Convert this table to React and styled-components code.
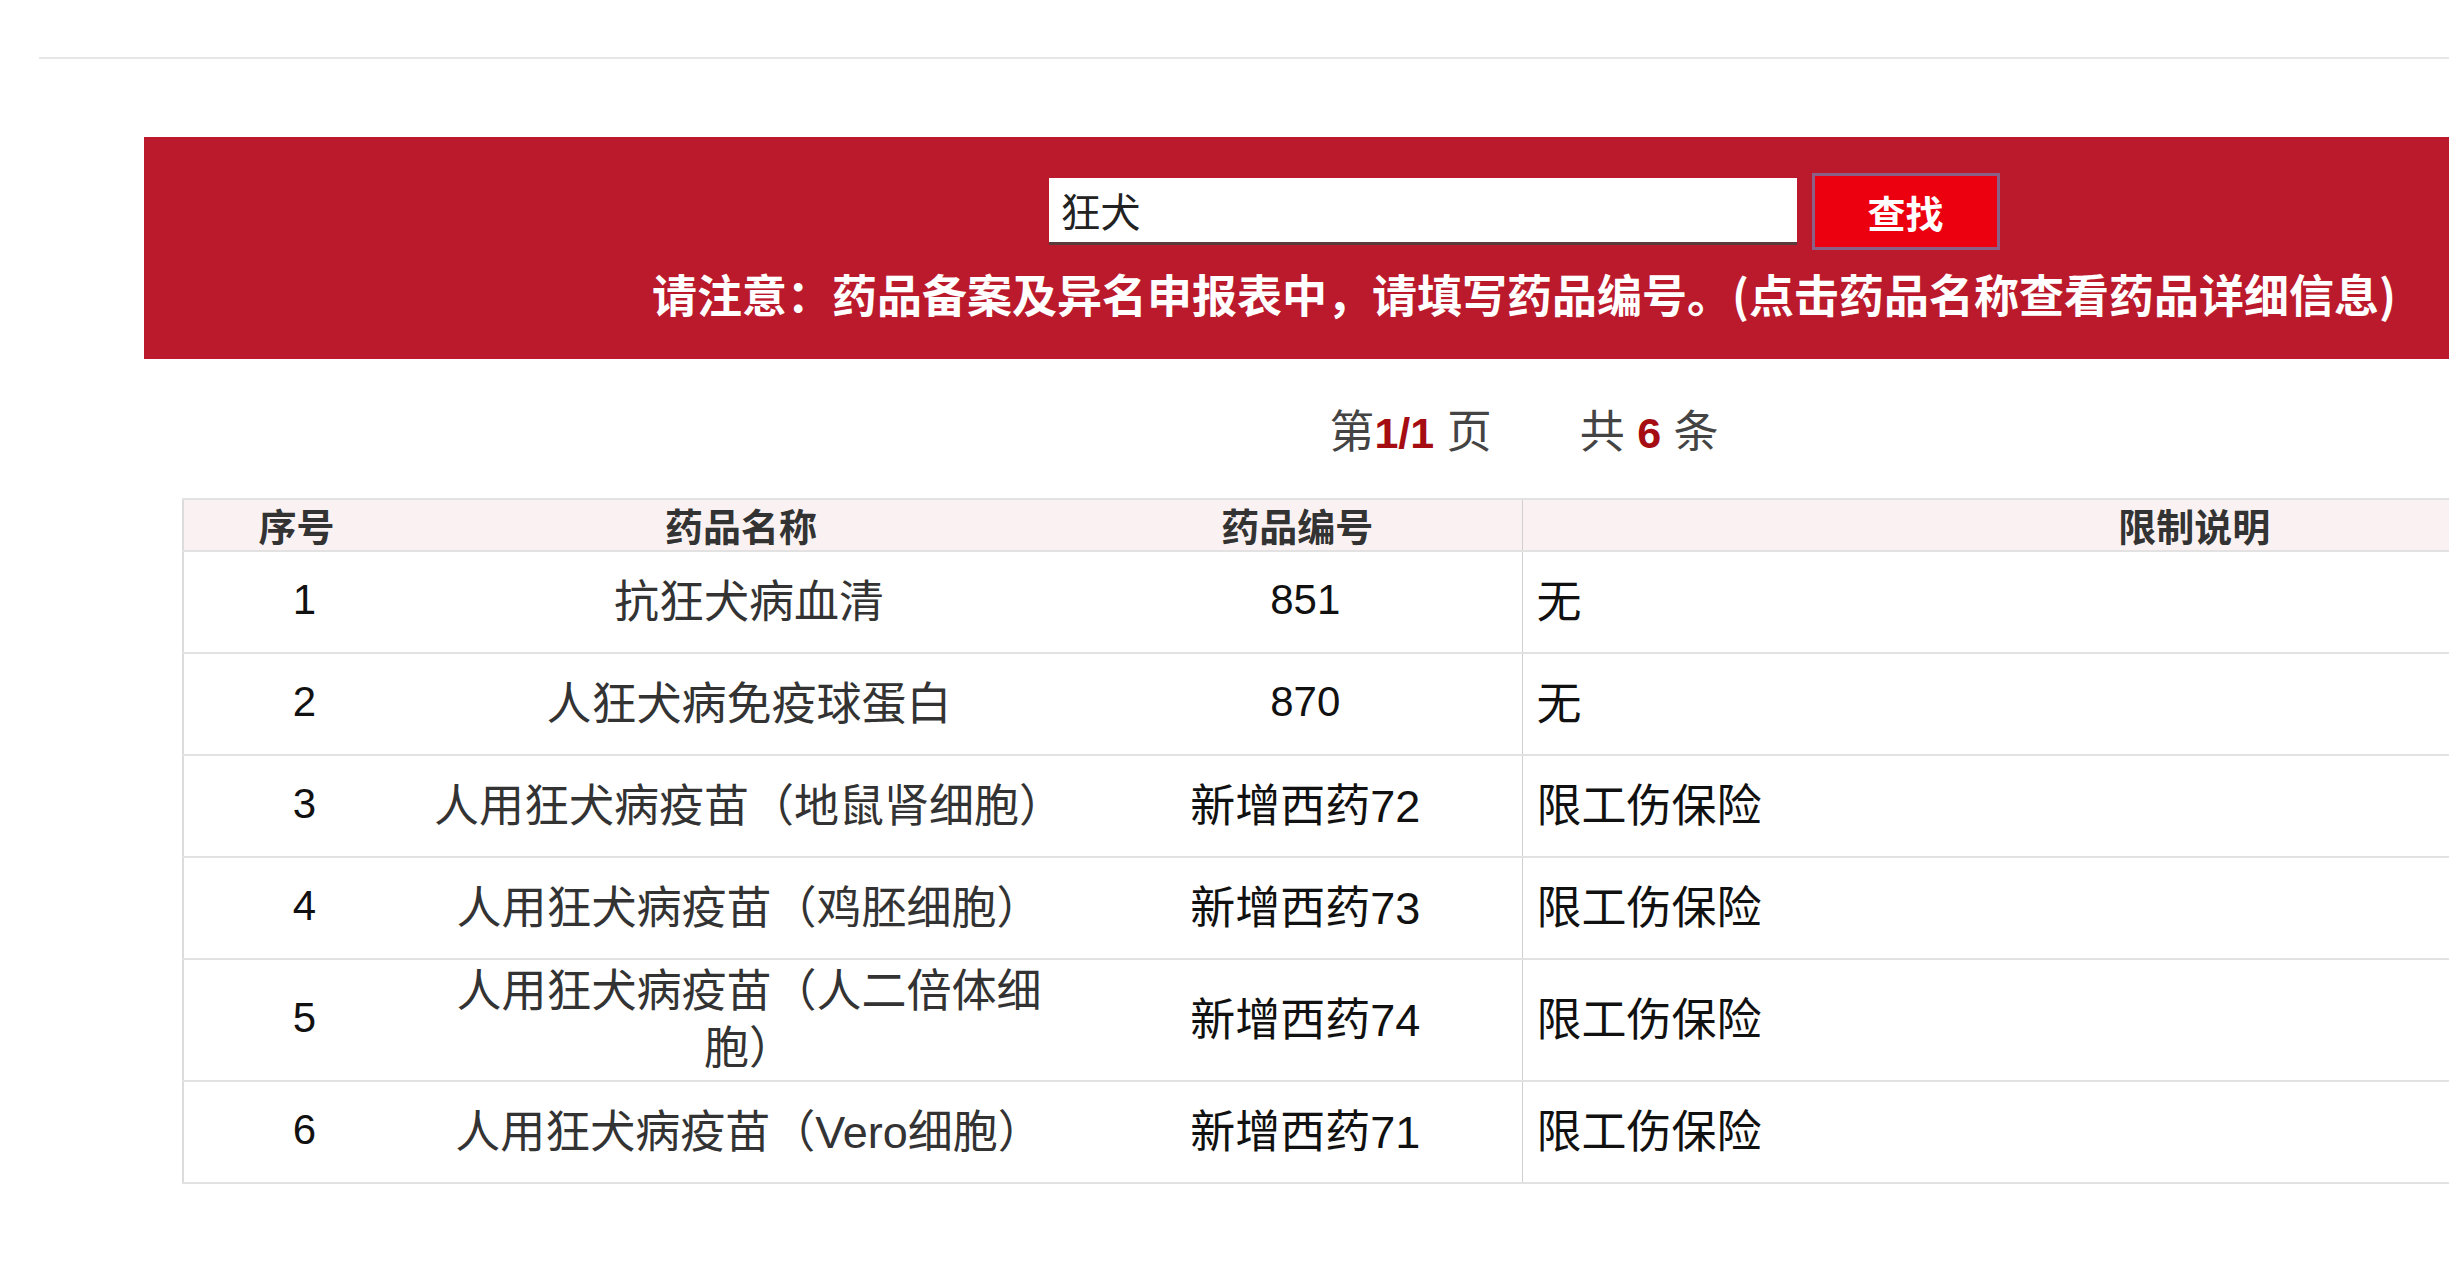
import React, { useState } from "react"
import styled, { createGlobalStyle } from "styled-components"

const GlobalStyle = createGlobalStyle`
  html, body {
    margin: 0;
    padding: 0;
    overflow: hidden;
    background: #fff;
  }
  body {
    font-family: "Liberation Sans", "Noto Sans CJK SC", sans-serif;
    color: #333;
  }
`

const Page = styled.div`
  width: 3048px;
  display: flex;
  flex-direction: column;
  align-items: center;
  padding-top: 57px;
`

const TopRule = styled.div`
  width: 2970px;
  height: 2px;
  background: #e6e6e6;
`

const Banner = styled.div`
  width: 2760px;
  margin-top: 78px;
  background: #bb1a2c;
  padding: 36px 0 35px;
  display: flex;
  flex-direction: column;
  align-items: center;
`

const SearchRow = styled.form`
  display: flex;
  align-items: center;
  gap: 15px;
  height: 77px;
`

const SearchInput = styled.input`
  box-sizing: border-box;
  width: 748px;
  height: 67px;
  border: none;
  border-bottom: 3px solid #5a3a3a;
  background: #fff;
  padding: 0 12px;
  font-family: "Noto Sans CJK SC", sans-serif;
  font-size: 40px;
  color: #222;
  outline: none;
`

const SearchButton = styled.button`
  box-sizing: border-box;
  width: 188px;
  height: 77px;
  background: #ec0010;
  border: 3px solid #8c5f86;
  color: #fff;
  font-family: "Noto Sans CJK SC", sans-serif;
  font-weight: 700;
  font-size: 38px;
  cursor: pointer;
`

const Notice = styled.p`
  margin: 14px 0 0;
  line-height: 60px;
  font-family: "Noto Sans CJK SC", sans-serif;
  font-weight: 700;
  font-size: 45px;
  color: #fff;
  white-space: nowrap;
`

const Pager = styled.div`
  margin-top: 44px;
  line-height: 60px;
  font-size: 45px;
  color: #444;
  display: flex;
  gap: 88px;
`

const Num = styled.b`
  color: #a50d12;
  font-family: "Liberation Sans", sans-serif;
  font-size: 43px;
`

const Table = styled.table`
  margin-top: 35px;
  width: 2683px;
  table-layout: fixed;
  border-collapse: collapse;
  border-left: 2px solid #dcdcdc;
`

const HeadCell = styled.th`
  height: 50px;
  padding: 0;
  background: #faf2f2;
  border-top: 2px solid #e2e2e2;
  border-bottom: 2px solid #e2e2e2;
  border-left: ${p => (p.$divided ? "1px solid #cfcfcf" : "none")};
  font-family: "Noto Sans CJK SC", sans-serif;
  font-weight: 700;
  font-size: 38px;
  line-height: 48px;
  color: #333;
  text-align: center;
`

const Row = styled.tr`
  height: 102px;
`

const Cell = styled.td`
  padding: ${p => (p.$align === "left" ? "3px 14px" : "3px 6px 3px 22px")};
  border-bottom: 2px solid #e2e2e2;
  border-left: ${p => (p.$divided ? "1px solid #cfcfcf" : "none")};
  text-align: ${p => p.$align || "center"};
  vertical-align: middle;
  font-size: 45px;
  line-height: 57px;
  color: ${p => (p.$dark ? "#111" : "#333")};
`

const Digits = styled.span`
  font-size: 42px;
  position: relative;
  top: -3px;
`

const drugs = [
  { id: 1, name: "抗狂犬病血清", code: <Digits>851</Digits>, limit: "无" },
  { id: 2, name: "人狂犬病免疫球蛋白", code: <Digits>870</Digits>, limit: "无" },
  { id: 3, name: "人用狂犬病疫苗（地鼠肾细胞）", code: "新增西药72", limit: "限工伤保险" },
  { id: 4, name: "人用狂犬病疫苗（鸡胚细胞）", code: "新增西药73", limit: "限工伤保险" },
  {
    id: 5,
    name: (
      <>
        人用狂犬病疫苗（人二倍体细
        <br />
        胞）
      </>
    ),
    code: "新增西药74",
    limit: "限工伤保险",
  },
  { id: 6, name: "人用狂犬病疫苗（Vero细胞）", code: "新增西药71", limit: "限工伤保险" },
]

const App = () => {
  const [keyword, setKeyword] = useState("狂犬")

  return (
    <>
      <GlobalStyle />
      <Page>
        <TopRule />
        <Banner>
          <SearchRow onSubmit={e => e.preventDefault()}>
            <SearchInput value={keyword} onChange={e => setKeyword(e.target.value)} />
            <SearchButton type="submit">查找</SearchButton>
          </SearchRow>
          <Notice>
            请注意：药品备案及异名申报表中，请填写药品编号。(点击药品名称查看药品详细信息)
          </Notice>
        </Banner>
        <Pager>
          <span>
            第<Num>1/1</Num> 页
          </span>
          <span>
            共 <Num>6</Num> 条
          </span>
        </Pager>
        <Table>
          <colgroup>
            <col style={{ width: 226 }} />
            <col style={{ width: 664 }} />
            <col style={{ width: 449 }} />
            <col style={{ width: 1344 }} />
          </colgroup>
          <thead>
            <tr>
              <HeadCell>序号</HeadCell>
              <HeadCell>药品名称</HeadCell>
              <HeadCell>药品编号</HeadCell>
              <HeadCell $divided>限制说明</HeadCell>
            </tr>
          </thead>
          <tbody>
            {drugs.map(d => (
              <Row key={d.id}>
                <Cell $dark>
                  <Digits>{d.id}</Digits>
                </Cell>
                <Cell>{d.name}</Cell>
                <Cell $dark>{d.code}</Cell>
                <Cell $divided $dark $align="left">
                  {d.limit}
                </Cell>
              </Row>
            ))}
          </tbody>
        </Table>
      </Page>
    </>
  )
}

export default App
